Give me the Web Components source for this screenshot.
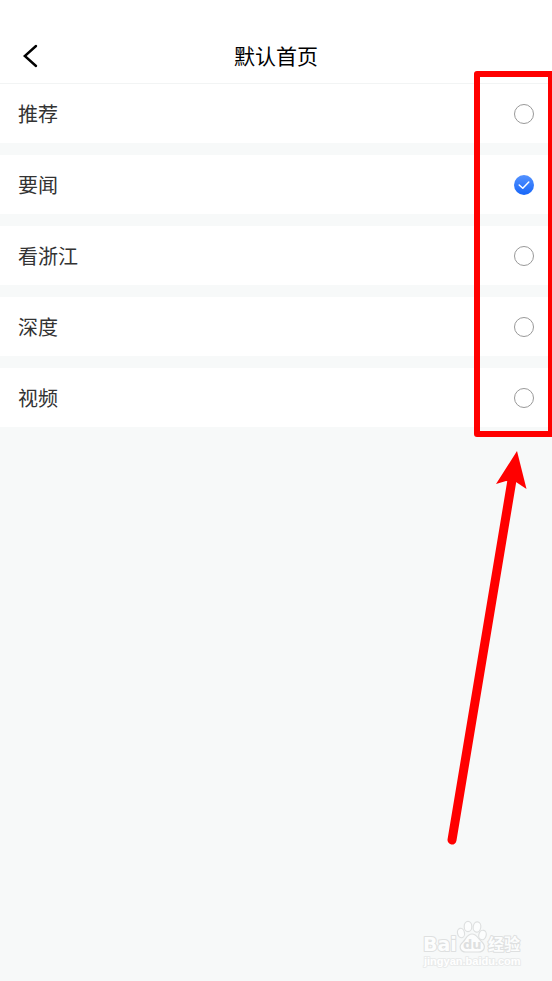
<!DOCTYPE html>
<html lang="zh-CN">
<head>
<meta charset="utf-8">
<meta name="viewport" content="width=device-width, initial-scale=1">
<title>默认首页</title>
<style>
    body {
        margin: 0;
        background-color: #f7f9f9;
        font-family: "Noto Sans CJK SC", sans-serif;
        color: #333;
    }
</style>
</head>
<body>
<settings-page>
    <page-header slot="header">默认首页</page-header>
    <choice-list>
        <choice-row>推荐</choice-row>
        <choice-row checked>要闻</choice-row>
        <choice-row>看浙江</choice-row>
        <choice-row>深度</choice-row>
        <choice-row>视频</choice-row>
    </choice-list>
    <guide-mark slot="overlay"></guide-mark>
    <site-mark slot="overlay"></site-mark>
</settings-page>

<script>
function attach(host, html) {
    const template = document.createElement('template')
    template.innerHTML = html
    const root = host.attachShadow({ mode: 'open' })
    root.appendChild(template.content.cloneNode(true))
    return root
}

class SettingsPage extends HTMLElement {
    constructor() {
        super()
        attach(this, `
<style>
    :host {
        display: flex;
        flex-direction: column;
        position: relative;
        min-height: 100vh;
        overflow: hidden;
    }
</style>
<slot name="header"></slot>
<main><slot></slot></main>
<slot name="overlay"></slot>
`)
    }
}

class PageHeader extends HTMLElement {
    constructor() {
        super()
        const root = attach(this, `
<style>
    :host {
        display: block;
        padding-top: 29px;
        border-bottom: 1px solid #f2f4f4;
        background-color: #fff;
        color: #000;
    }

    header {
        display: grid;
        grid-template-columns: 60px 1fr 60px;
        align-items: center;
        height: 54px;
    }

    button {
        display: grid;
        place-items: center;
        height: 44px;
        padding: 0;
        border: 0;
        background: none;
        color: inherit;
    }

    h1 {
        margin: 0;
        padding-bottom: 2px;
        font-size: 21px;
        font-weight: 400;
        line-height: 32px;
        text-align: center;
    }
</style>
<header>
    <button type="button" aria-label="返回">
        <svg width="16" height="24" viewBox="0 0 16 24" fill="none" stroke="currentColor" stroke-width="2.4" stroke-linecap="round" stroke-linejoin="miter">
            <path d="M14 2 2.800 12 14 22"/>
        </svg>
    </button>
    <h1><slot></slot></h1>
</header>
`)
        root.querySelector('button').addEventListener('click', () => history.back())
    }
}

class ChoiceRow extends HTMLElement {
    constructor() {
        super()
        const root = attach(this, `
<style>
    :host {
        display: block;
        background-color: #fff;
    }

    label {
        box-sizing: border-box;
        display: flex;
        justify-content: space-between;
        align-items: center;
        height: 59px;
        padding: 0 18px;
        font-size: 20px;
        line-height: 30px;
    }

    input {
        appearance: none;
        box-sizing: border-box;
        width: 20px;
        height: 20px;
        margin: 0;
        border: 1px solid #999;
        border-radius: 50%;
        background: #fff;
    }

    input:checked {
        border: 0;
        background: linear-gradient(#5492ff, #1766f8);
    }

    .control {
        display: grid;
    }

    .control > * {
        grid-area: 1 / 1;
    }

    svg {
        visibility: hidden;
        pointer-events: none;
    }

    input:checked + svg {
        visibility: visible;
    }
</style>
<label>
    <span><slot></slot></span>
    <span class="control">
        <input type="radio">
        <svg width="20" height="20" viewBox="0 0 20 20" fill="none" stroke="#fff" stroke-width="1.500" stroke-linecap="round" stroke-linejoin="round">
            <path d="M5.200 10 8.800 13.300 14.800 7"/>
        </svg>
    </span>
</label>
`)
        this.input = root.querySelector('input')
        this.input.addEventListener('change', () => {
            this.dispatchEvent(new CustomEvent('choose', { bubbles: true }))
        })
    }

    connectedCallback() {
        this.input.checked = this.hasAttribute('checked')
    }
}

class ChoiceList extends HTMLElement {
    constructor() {
        super()
        attach(this, `
<style>
    :host {
        display: flex;
        flex-direction: column;
        gap: 12px;
    }
</style>
<slot></slot>
`)
        // each radio sits in its own root, so the browser does not group them
        this.addEventListener('choose', e => {
            this.querySelectorAll('choice-row').forEach(row => {
                row.input.checked = row === e.target
            })
        })
    }
}

class GuideMark extends HTMLElement {
    constructor() {
        super()
        attach(this, `
<style>
    :host {
        position: absolute;
        top: 71px;
        right: 0;
        pointer-events: none;
    }

    svg {
        display: block;
    }
</style>
<svg width="110" height="780" viewBox="0 0 110 780" aria-hidden="true">
    <rect x="35" y="3" width="74" height="360" fill="none" stroke="#f00" stroke-width="6" stroke-linejoin="round"/>
    <path d="M70 409 10 769" stroke="#f00" stroke-width="9" stroke-linecap="round"/>
    <path d="M75 380 54 413 64 410 74 411 84.500 418Z" fill="#f00"/>
</svg>
`)
    }
}

class SiteMark extends HTMLElement {
    constructor() {
        super()
        attach(this, `
<style>
    :host {
        position: absolute;
        right: 15px;
        bottom: 6px;
        pointer-events: none;
    }

    svg {
        display: block;
    }

    text {
        font-family: "Liberation Sans", "Noto Sans CJK SC", sans-serif;
        font-weight: 700;
        paint-order: stroke;
    }

    .brand {
        font-family: "DejaVu Sans", sans-serif;
    }
</style>
<svg width="125" height="65" viewBox="0 0 125 65" fill="#fcfdfd" stroke="#dee0e0" stroke-width="2" stroke-linejoin="round">
    <text class="brand" x="11" y="41" font-size="19">Bai</text>
    <g stroke-width="1.200">
        <ellipse cx="49" cy="23" rx="3.500" ry="4.800" transform="rotate(-12 49 23)"/>
        <ellipse cx="56" cy="16.500" rx="3.800" ry="5.200"/>
        <ellipse cx="65" cy="17" rx="3.800" ry="5.200" transform="rotate(8 65 17)"/>
        <ellipse cx="70.500" cy="25" rx="3.700" ry="4.800" transform="rotate(15 70.500 25)"/>
        <path d="M60 24C55 24 54 29 51 32 46 36 48 42 54 42H66C73 42 74 36 70 32 66 29 65 24 60 24Z"/>
    </g>
    <text class="brand" x="51" y="39" font-size="13" fill="#dee0e0" stroke="none">du</text>
    <text x="76" y="40" font-size="16">经验</text>
    <text x="12" y="55" font-size="11" fill="#fff" stroke="#e9ebeb">jingyan.baidu.com</text>
</svg>
`)
    }
}

customElements.define('settings-page', SettingsPage)
customElements.define('page-header', PageHeader)
customElements.define('choice-row', ChoiceRow)
customElements.define('choice-list', ChoiceList)
customElements.define('guide-mark', GuideMark)
customElements.define('site-mark', SiteMark)
</script>
</body>
</html>
